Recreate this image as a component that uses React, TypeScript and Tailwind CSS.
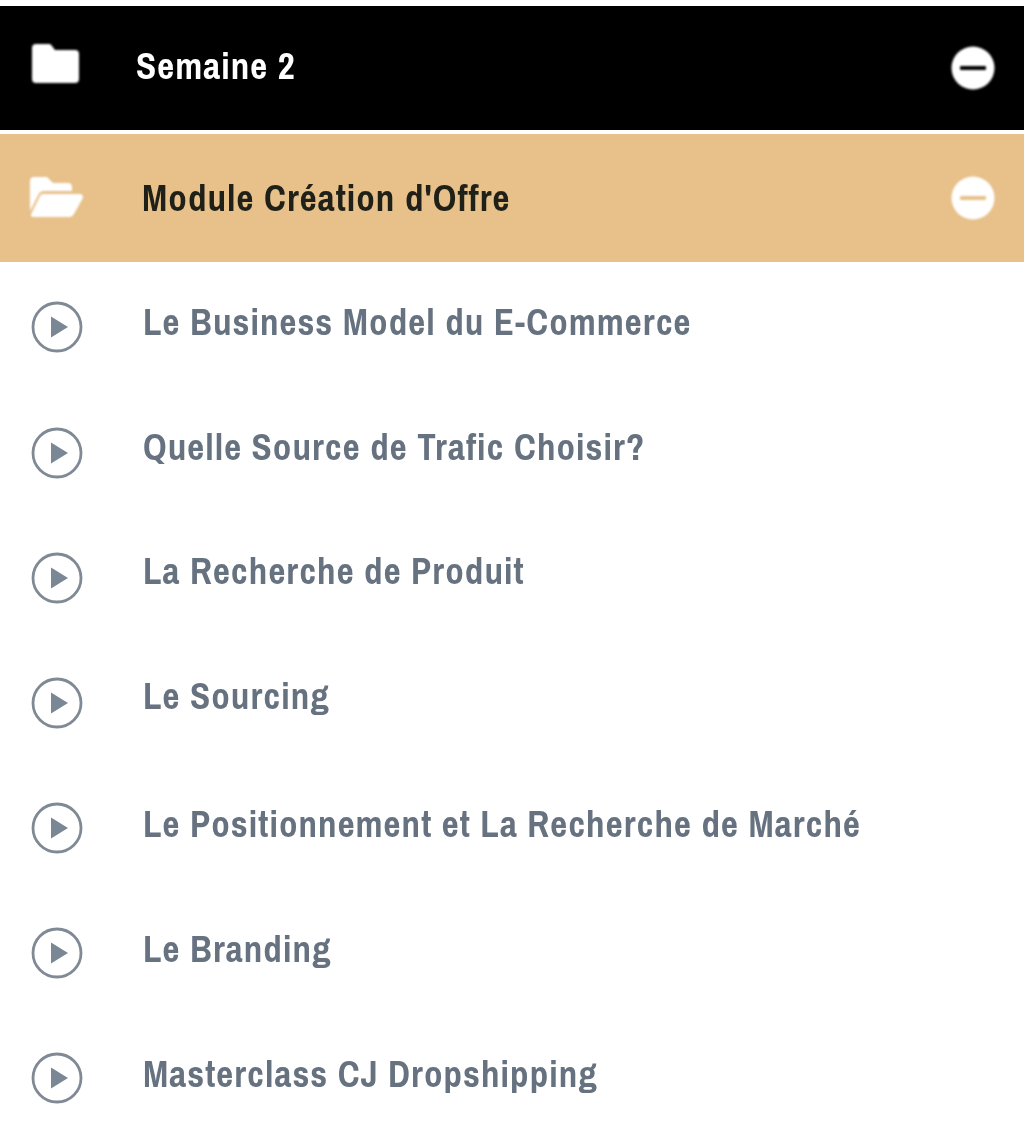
const lessons = [
  { title: "Le Business Model du E-Commerce", shift: "-translate-y-[5px]", icon: "-translate-y-[1px]" },
  { title: "Quelle Source de Trafic Choisir?", shift: "-translate-y-[5px]", icon: "" },
  { title: "La Recherche de Produit", shift: "-translate-y-[6px]", icon: "" },
  { title: "Le Sourcing", shift: "-translate-y-[6px]", icon: "" },
  { title: "Le Positionnement et La Recherche de Marché", shift: "-translate-y-[3px]", icon: "" },
  { title: "Le Branding", shift: "-translate-y-[3px]", icon: "" },
  { title: "Masterclass CJ Dropshipping", shift: "-translate-y-[3px]", icon: "" },
];

function Minus({ bar }: { bar: string }) {
  return (
    <svg width="44" height="44" viewBox="0 0 44 44" className="shrink-0 blur-[0.8px]">
      <circle cx="22" cy="22" r="21.5" fill="#fff" />
      <rect x="9" y="20" width="26" height="4" rx="1" fill={bar} />
    </svg>
  );
}

function Play({ className }: { className: string }) {
  return (
    <svg width="52" height="52" viewBox="0 0 52 52" className={`shrink-0 blur-[0.7px] ${className}`}>
      <circle cx="26" cy="26" r="24" fill="none" stroke="#808a95" strokeWidth="2.800" />
      <path d="M20 15.500 L37 26 L20 36.500 Z" fill="#7a8794" />
    </svg>
  );
}

export default function App() {
  return (
    <div className="w-[1024px] h-[1134px] bg-white pt-[6px] overflow-hidden font-['Liberation_Sans_Narrow','Archivo_Narrow',sans-serif] tracking-[1.05px]">
      <div className="h-[124px] bg-black flex items-center pl-[32px] pr-[29px] text-white">
        <svg width="47" height="40" viewBox="0 0 47 40" className="shrink-0 mr-[57px] -translate-y-[5px] blur-[0.8px]">
          <path d="M4 1h13a3 3 0 0 1 2.400 1.200L23 7h20a4 4 0 0 1 4 4v25a4 4 0 0 1-4 4H4a4 4 0 0 1-4-4V5a4 4 0 0 1 4-4z" fill="#fff" />
        </svg>
        <span className="text-[37px] font-bold flex-1 leading-none -translate-y-[2px] blur-[0.7px]">Semaine 2</span>
        <Minus bar="#000" />
      </div>
      <div className="h-[128px] mt-[4px] bg-[#e7c08a] flex items-center pl-[30px] pr-[29px]">
        <svg width="53" height="40" viewBox="0 0 53 40" className="shrink-0 mr-[59px] -translate-y-[1px] blur-[0.8px]">
          <path d="M0 34V4a4 4 0 0 1 4-4h13l6 6h15a4 4 0 0 1 4 4v4H14a6 6 0 0 0-5.500 3.500z" fill="#fff" />
          <path d="M13 17h37a3 3 0 0 1 2.700 4.300L44 37a5 5 0 0 1-4 3H3a2 2 0 0 1-1.800-3L10 19a4 4 0 0 1 3-2z" fill="#fff" />
        </svg>
        <span className="text-[37px] font-bold flex-1 leading-none text-[#1f2118] blur-[0.7px]">Module Création d'Offre</span>
        <Minus bar="#e7c08a" />
      </div>
      <ul className="pt-[3px]">
        {lessons.map((l) => (
          <li key={l.title} className="h-[125px] flex items-center pl-[31px]">
            <Play className={l.icon} />
            <span className={`ml-[60px] text-[37px] font-bold leading-none text-[#667280] blur-[0.7px] ${l.shift}`}>{l.title}</span>
          </li>
        ))}
      </ul>
    </div>
  );
}
